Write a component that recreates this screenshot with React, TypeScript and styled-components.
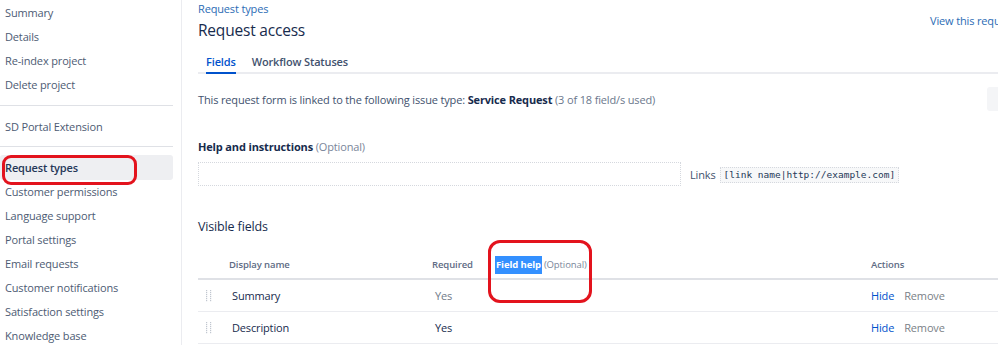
import React from "react";
import styled, { createGlobalStyle } from "styled-components";

const GlobalStyle = createGlobalStyle`
  html, body { margin: 0; padding: 0; background: #fff; }
  body { font-family: "Open Sans", "Noto Sans", sans-serif; color: #172b4d; letter-spacing: -0.15px; }
  * { box-sizing: border-box; }
`;

const Page = styled.div`
  width: 998px;
  height: 345px;
  display: flex;
  overflow: hidden;
  position: relative;
`;

const Sidebar = styled.nav`
  flex: 0 0 182px;
  border-right: 1px solid #ebecf0;
  padding: 1px 8px 0 0;
  display: flex;
  flex-direction: column;
  & > * { flex-shrink: 0; }
`;

const NavItem = styled.div<{ $active?: boolean }>`
  height: ${(p) => (p.$active ? "25px" : "24px")};
  line-height: ${(p) => (p.$active ? "25px" : "24px")};
  padding-left: 5px;
  font-size: 11px;
  white-space: nowrap;
  color: ${(p) => (p.$active ? "#253858" : "#4d5b73")};
  font-weight: ${(p) => (p.$active ? 600 : 400)};
  background: ${(p) => (p.$active ? "#eeeff2" : "transparent")};
  border-radius: 3px;
`;

const Divider = styled.hr<{ $top: number; $bottom: number }>`
  border: 0;
  border-top: 1px solid #dfe1e6;
  margin: ${(p) => p.$top}px 0 ${(p) => p.$bottom}px;
  height: 0;
`;

const Main = styled.main`
  flex: 1 0 auto;
  padding-left: 16px;
  display: flex;
  flex-direction: column;
  min-width: 0;
  & > * { flex-shrink: 0; }
`;

const HeaderRow = styled.div`
  display: grid;
  grid-template-columns: 732px auto;
  height: 51px;
`;

const HeaderLeft = styled.div`
  display: flex;
  flex-direction: column;
`;

const Breadcrumb = styled.a`
  font-size: 11px;
  line-height: 18px;
  color: #2c6cb5;
  text-decoration: none;
`;

const Title = styled.h1`
  margin: 0;
  font-size: 15.5px;
  font-weight: 500;
  letter-spacing: -0.2px;
  line-height: 24px;
  color: #172b4d;
`;

const PortalLink = styled.a`
  font-size: 11px;
  line-height: 18px;
  margin-top: 12px;
  color: #2c6cb5;
  white-space: nowrap;
  text-decoration: none;
`;

const Tabs = styled.div`
  display: flex;
  gap: 16px;
  padding-left: 8px;
  border-bottom: 2px solid #ebecf0;
  width: 820px;
  height: 23px;
`;

const Tab = styled.div<{ $active?: boolean }>`
  font-size: 11px;
  font-weight: 600;
  line-height: 21px;
  color: ${(p) => (p.$active ? "#0052cc" : "#42526e")};
  border-bottom: 2px solid ${(p) => (p.$active ? "#0052cc" : "transparent")};
  margin-bottom: -2px;
  white-space: nowrap;
`;

const InfoRow = styled.div`
  display: grid;
  grid-template-columns: 789px auto;
  align-items: center;
  margin-top: 13px;
  height: 24px;
`;

const InfoText = styled.div`
  font-size: 11px;
  color: #42526e;
  white-space: nowrap;
  b { color: #172b4d; font-weight: 700; }
`;

const Muted = styled.span`
  color: #6b778c;
`;

const GrayButton = styled.button`
  height: 24px;
  padding: 0 8px;
  border: 0;
  border-radius: 3px;
  background: #f4f5f7;
  color: #42526e;
  font: inherit;
  font-size: 11px;
  white-space: nowrap;
`;

const SectionLabel = styled.div`
  margin-top: 27px;
  font-size: 11px;
  font-weight: 700;
  line-height: 18px;
  color: #172b4d;
`;

const Optional = styled.span`
  font-weight: 400;
  color: #7a869a;
`;

const HelpRow = styled.div`
  display: flex;
  align-items: center;
  margin-top: 6px;
  gap: 9px;
`;

const HelpBox = styled.div`
  width: 483px;
  height: 24px;
  border: 1px dotted #d5d8de;
`;

const LinksHint = styled.div`
  display: flex;
  align-items: center;
  gap: 4px;
  font-size: 11px;
  color: #42526e;
  margin-top: 1px;
`;

const Code = styled.code`
  font-family: "DejaVu Sans Mono", "Liberation Mono", monospace;
  font-size: 9.5px;
  letter-spacing: 0;
  line-height: 14px;
  padding: 0 3px;
  background: #f7f8f9;
  border: 1px dotted #d5d8de;
  color: #253858;
  white-space: nowrap;
`;

const SubHeading = styled.h2`
  margin: 31px 0 0;
  font-size: 12.5px;
  font-weight: 500;
  line-height: 20px;
  color: #172b4d;
`;

const Table = styled.div`
  margin-top: 13px;
  width: 820px;
`;

const Row = styled.div<{ $head?: boolean }>`
  display: grid;
  grid-template-columns: 31px 203px 63px 376px 1fr;
  align-items: center;
  height: ${(p) => (p.$head ? "30px" : "32px")};
  border-bottom: ${(p) => (p.$head ? "2px solid #dfe1e6" : "1px solid #ebecf0")};
`;

const HeadCell = styled.div`
  font-size: 9.5px;
  font-weight: 600;
  letter-spacing: -0.1px;
  color: #5e6c84;
  white-space: nowrap;
`;

const Highlight = styled.span`
  background: #3390ff;
  color: #fff;
  font-weight: 700;
  padding: 2px 1px 3px;
`;

const HeadOptional = styled.span`
  font-weight: 400;
  color: #7a869a;
  margin-left: 2px;
`;

const Cell = styled.div<{ $tone?: "muted" | "dark" }>`
  font-size: 11px;
  white-space: nowrap;
  color: ${(p) => (p.$tone === "muted" ? "#707a8a" : "#172b4d")};
  padding-left: 3px;
`;

const Handle = styled.div`
  padding-left: 8px;
  display: flex;
  align-items: center;
`;

const Actions = styled.div`
  display: flex;
  gap: 10px;
  font-size: 11px;
`;

const ActionLink = styled.a<{ $muted?: boolean }>`
  color: ${(p) => (p.$muted ? "#7a7f87" : "#0052cc")};
  text-decoration: none;
`;

const Annotation = styled.div<{ $x: number; $y: number; $w: number; $h: number; $r: number }>`
  position: absolute;
  left: ${(p) => p.$x}px;
  top: ${(p) => p.$y}px;
  width: ${(p) => p.$w}px;
  height: ${(p) => p.$h}px;
  border: 3px solid #e3131d;
  border-radius: ${(p) => p.$r}px;
  pointer-events: none;
`;

const DragIcon = () => (
  <svg width="6" height="13" viewBox="0 0 6 13">
    {[0, 1, 2, 3, 4, 5].map((i) => (
      <g key={i} fill="#c1c7d0">
        <rect x="0" y={i * 2 + 1} width="1.2" height="1.2" />
        <rect x="4" y={i * 2 + 1} width="1.2" height="1.2" />
      </g>
    ))}
  </svg>
);

const topNav = ["Summary", "Details", "Re-index project", "Delete project"];
const bottomNav = [
  "Customer permissions",
  "Language support",
  "Portal settings",
  "Email requests",
  "Customer notifications",
  "Satisfaction settings",
  "Knowledge base",
];

const fields = [
  { name: "Summary", tone: "muted" as const },
  { name: "Description", tone: "dark" as const },
];

export default function App() {
  return (
    <>
      <GlobalStyle />
      <Page>
        <Sidebar>
          {topNav.map((n) => (
            <NavItem key={n}>{n}</NavItem>
          ))}
          <Divider $top={8} $bottom={9} />
          <NavItem>SD Portal Extension</NavItem>
          <Divider $top={7} $bottom={8} />
          <NavItem $active>Request types</NavItem>
          {bottomNav.map((n) => (
            <NavItem key={n}>{n}</NavItem>
          ))}
        </Sidebar>
        <Main>
          <HeaderRow>
            <HeaderLeft>
              <Breadcrumb>Request types</Breadcrumb>
              <Title>Request access</Title>
            </HeaderLeft>
            <PortalLink>View this request type in portal</PortalLink>
          </HeaderRow>
          <Tabs>
            <Tab $active>Fields</Tab>
            <Tab>Workflow Statuses</Tab>
          </Tabs>
          <InfoRow>
            <InfoText>
              This request form is linked to the following issue type: <b>Service Request</b>{" "}
              <Muted>(3 of 18 field/s used)</Muted>
            </InfoText>
            <GrayButton>Add a field</GrayButton>
          </InfoRow>
          <SectionLabel>
            Help and instructions <Optional>(Optional)</Optional>
          </SectionLabel>
          <HelpRow>
            <HelpBox />
            <LinksHint>
              Links <Code>[link name|http://example.com]</Code>
            </LinksHint>
          </HelpRow>
          <SubHeading>Visible fields</SubHeading>
          <Table>
            <Row $head>
              <span />
              <HeadCell>Display name</HeadCell>
              <HeadCell>Required</HeadCell>
              <HeadCell>
                <Highlight>Field help</Highlight>
                <HeadOptional>(Optional)</HeadOptional>
              </HeadCell>
              <HeadCell>Actions</HeadCell>
            </Row>
            {fields.map((f) => (
              <Row key={f.name}>
                <Handle>
                  <DragIcon />
                </Handle>
                <Cell>{f.name}</Cell>
                <Cell $tone={f.tone}>Yes</Cell>
                <span />
                <Actions>
                  <ActionLink>Hide</ActionLink>
                  <ActionLink $muted>Remove</ActionLink>
                </Actions>
              </Row>
            ))}
          </Table>
        </Main>
        <Annotation $x={2} $y={155} $w={135} $h={30} $r={9} />
        <Annotation $x={488} $y={240} $w={104} $h={63} $r={12} />
      </Page>
    </>
  );
}
